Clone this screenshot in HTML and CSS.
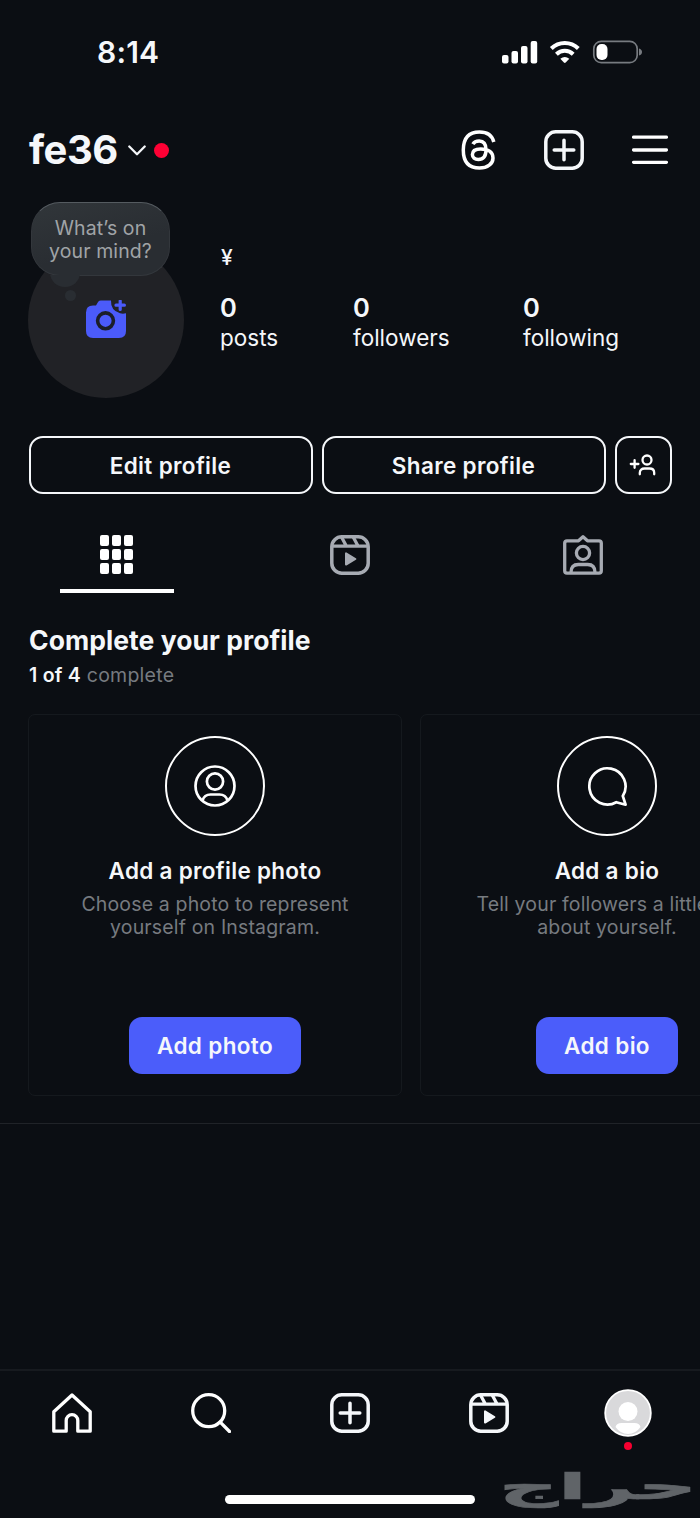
FILE: index.html
```html
<!DOCTYPE html>
<html lang="en">
<head>
<meta charset="utf-8">
<title>Profile</title>
<link rel="stylesheet" href="styles.css">
</head>
<body>
<svg class="defs" width="0" height="0" aria-hidden="true">
  <symbol id="reels" viewBox="0 0 40 40">
    <rect x="1.8" y="1.8" width="36.4" height="36.4" rx="10" fill="none" stroke="currentColor" stroke-width="3.5"/>
    <path d="M2 11.2H38M11.5 2l4.8 9M23.200 2l4.800 9" fill="none" stroke="currentColor" stroke-width="3.300"/>
    <path d="M16 18.400v11.200l9.400-5.600z" fill="currentColor" stroke="currentColor" stroke-width="2" stroke-linejoin="round"/>
  </symbol>
  <symbol id="plus" viewBox="0 0 40 40">
    <g fill="none" stroke="currentColor" stroke-width="3.5" stroke-linecap="round">
      <rect x="1.8" y="1.8" width="36.400" height="36.400" rx="10"/><path d="M20 10.200v19.600M10.200 20h19.600"/>
    </g>
  </symbol>
</svg>
<div class="screen">
  <header class="status">
    <span class="clock">8:14</span>
    <svg class="status-icons" viewBox="0 0 140 24" fill="#fff">
      <rect x="0" y="15" width="6.500" height="8.500" rx="2"/><rect x="9.500" y="11" width="6.500" height="12.500" rx="2"/><rect x="19" y="6" width="6.500" height="17.500" rx="2"/><rect x="28.700" y="1" width="6.500" height="22.500" rx="2"/>
      <g fill="none" stroke="#fff" stroke-width="4"><path d="M49.300 8.500a19.300 19.300 0 0 1 27 0"/><path d="M54.400 14.200a12 12 0 0 1 16.800 0"/></g>
      <path d="M58.300 18.800q4.500-3.600 9 0l-3.600 3.800q-.9.900-1.800 0z"/>
      <rect x="91.800" y="1.300" width="43.400" height="21.400" rx="7.500" fill="none" stroke="#777b80" stroke-width="1.700"/>
      <rect x="94.500" y="4" width="11" height="16" rx="5"/>
      <path d="M137 8.500q3 1 3 3.500t-3 3.500z" fill="#777b80"/>
    </svg>
  </header>

  <div class="topbar">
    <h1 class="username">fe36</h1>
    <svg class="chevron" viewBox="0 0 18 11"><path d="M1.300 1.500 9 9.200l7.700-7.700" fill="none" stroke="#f5f7fa" stroke-width="2.300" stroke-linecap="round" stroke-linejoin="round"/></svg>
    <i class="alert"></i>
    <div class="top-icons">
      <svg class="threads" viewBox="0 0 36 40"><path d="M32.800 12C31.200 5.200 26.300 1.900 18.500 1.900 7.500 1.900 2.300 8.500 2.300 20s5.200 18.100 16.200 18.100c8 0 13.500-4.300 13.500-10.200 0-5.900-5-9-12.300-9-5.200 0-8.300 2.100-8.300 5.700 0 2.900 2.400 4.900 5.900 4.900 5 0 7.700-3.500 7.700-9.700 0-6-2.400-8.900-6.800-8.900-3 0-5.200 1.200-6.300 3.200" fill="none" stroke="#fff" stroke-width="3.500"/></svg>
      <svg class="icon"><use href="#plus"/></svg>
      <svg class="menu" viewBox="0 0 36 30"><path d="M1.600 2.200h32.800M1.600 15h32.800M1.600 27.300h32.800" stroke="#fff" stroke-width="3.300" stroke-linecap="round"/></svg>
    </div>
  </div>

  <section class="profile">
    <div class="avatar">
      <svg class="camera" viewBox="0 0 40 38">
        <path d="M7 5.500h3l2.200-3.800Q13.200.500 15 .500h10q-.5 10 9 12.700 2.500.8 6 .1V31q0 7-7 7H7q-7 0-7-7V12.500q0-7 7-7z" fill="#4b5bfa"/>
        <circle cx="19.500" cy="20.800" r="7.900" fill="none" stroke="#1b1e29" stroke-width="3.600"/>
        <path d="M34.200 1v8.400M30 5.200h8.400" stroke="#4b5bfa" stroke-width="3.200" stroke-linecap="round"/>
      </svg>
      <div class="note">What’s on<br>your mind?</div>
      <i class="tail"></i><i class="tail-dot"></i>
    </div>
    <div class="info">
      <div class="name">¥</div>
      <div class="stats">
        <div><b>0</b><span>posts</span></div>
        <div><b>0</b><span>followers</span></div>
        <div><b>0</b><span>following</span></div>
      </div>
    </div>
  </section>

  <div class="actions">
    <button class="outline">Edit profile</button>
    <button class="outline">Share profile</button>
    <button class="outline"><svg class="add-person" viewBox="0 0 28 22" fill="none" stroke="#fff" stroke-width="2.300" stroke-linecap="round"><path d="M1.800 10h7.600M5.600 6.200v7.600M10.800 20.300v-1.500c0-3 2-4.300 4.700-4.300h5c2.700 0 4.700 1.300 4.700 4.300v1.500"/><circle cx="18" cy="6" r="4.500"/></svg></button>
  </div>

  <nav class="tabs">
    <span class="tab active"><span class="grid"><i></i><i></i><i></i><i></i><i></i><i></i><i></i><i></i><i></i></span></span>
    <span class="tab"><svg class="icon"><use href="#reels"/></svg></span>
    <span class="tab"><svg class="icon" viewBox="0 0 40 40" fill="none" stroke="currentColor" stroke-width="3.300" stroke-linejoin="round"><path d="M4 5.800h11.500l4.500-4 4.500 4H36q2.300 0 2.300 2.300v27.700q0 2.400-2.300 2.400H4q-2.300 0-2.300-2.400V8.100Q1.700 5.800 4 5.800z"/><circle cx="20" cy="18" r="6.600"/><path d="M8 37.500c0-5.500 3-8 7.300-8h9.400c4.300 0 7.300 2.500 7.300 8"/></svg></span>
  </nav>

  <h2 class="heading">Complete your profile</h2>
  <p class="progress"><b>1 of 4</b> complete</p>

  <div class="cards">
    <article class="card">
      <div class="ring"><svg viewBox="0 0 42 42" fill="none" stroke="#fff" stroke-width="2.700"><circle cx="21" cy="21" r="19.500"/><circle cx="21" cy="16.500" r="8.100"/><path d="M8.500 35.500c1.200-4 4-6 8-6h9c4 0 6.800 2 8 6"/></svg></div>
      <h3>Add a profile photo</h3>
      <p>Choose a photo to represent<br>yourself on Instagram.</p>
      <button class="primary">Add photo</button>
    </article>
    <article class="card">
      <div class="ring"><svg viewBox="0 0 42 42" fill="none" stroke="#fff" stroke-width="2.700" stroke-linejoin="round"><path d="M36.800 31A18.100 18.100 0 1 0 30.300 37.200L39.600 39.700z"/></svg></div>
      <h3>Add a bio</h3>
      <p>Tell your followers a little bit<br>about yourself.</p>
      <button class="primary">Add bio</button>
    </article>
  </div>

  <footer class="bottom">
    <nav class="navbar">
      <span><svg class="icon" viewBox="0 0 40 40"><path d="M1.800 18.800 20 2l18.200 16.800v19.400H25.800V27.500a5.800 5.800 0 0 0-11.600 0v10.700H1.800z" fill="none" stroke="#fff" stroke-width="3.300" stroke-linejoin="round"/></svg></span>
      <span><svg class="icon" viewBox="0 0 40 40" fill="none" stroke="#fff" stroke-width="3.300" stroke-linecap="round"><circle cx="17.700" cy="17.700" r="16"/><path d="m29.200 29.200 9.300 9.300"/></svg></span>
      <span><svg class="icon"><use href="#plus"/></svg></span>
      <span><svg class="icon"><use href="#reels"/></svg></span>
      <span class="me"><svg viewBox="0 0 48 48"><circle cx="24" cy="24" r="22.800" fill="#d9d9db" stroke="#fff" stroke-width="1.800"/><circle cx="24" cy="22.500" r="9.500" fill="#fff"/><path d="M11.500 38q1-4 6-4h13q5 0 6 4-5 7-12.500 7t-12.500-7z" fill="#fff"/></svg><i class="nav-dot"></i></span>
    </nav>
    <div class="home-indicator"></div>
    <svg class="watermark" viewBox="0 0 196 42" lang="ar"><text x="98" y="27" text-anchor="middle" direction="rtl" textLength="198" lengthAdjust="spacingAndGlyphs">حراج</text></svg>
  </footer>
</div>
</body>
</html>
```
FILE: styles.css
```css
* { box-sizing: border-box; }
body { margin: 0; background: #0b0e13; color: #f5f7fa; font-family: Inter, "Noto Sans", sans-serif; }
h1, h2, h3, p { margin: 0; }
svg { display: block; flex: none; }
button { font: inherit; color: inherit; padding: 0; }
.defs { position: absolute; }
.screen { width: 700px; height: 1518px; overflow: hidden; display: flex; flex-direction: column; }
.icon { width: 40px; height: 40px; }

.status { height: 104px; padding: 0 58px 0 97px; display: flex; align-items: center; justify-content: space-between; flex: none; }
.clock { font-size: 30px; font-weight: 600; letter-spacing: .2px; }
.status-icons { width: 140px; height: 24px; }

.topbar { height: 92px; padding: 0 32px 0 29px; display: flex; align-items: center; flex: none; }
.username { font-size: 40px; line-height: 50px; font-weight: 700; letter-spacing: -.5px; width: 89px; }
.chevron { width: 18px; height: 11px; margin-left: 10px; }
.alert { width: 15px; height: 15px; border-radius: 50%; background: #ff0034; margin-left: 8px; }
.top-icons { display: flex; align-items: center; margin-left: auto; }
.threads { width: 36px; height: 40px; margin-right: 47px; }
.menu { width: 36px; height: 30px; margin-left: 48px; }

.profile { height: 240px; padding: 46px 0 0 28px; display: flex; flex: none; }
.avatar { position: relative; width: 156px; height: 156px; border-radius: 50%; background: #212226; padding: 58px 0 0 58px; flex: none; }
.camera { width: 40px; height: 38px; }
.note { position: absolute; left: 3px; top: -40px; width: 139px; height: 74px; border-radius: 29px; background: linear-gradient(165deg, #31363a, #292d32 60%); border: 1px solid #33373c; border-top-color: #555b60; color: #a0a4a7; font-size: 19.500px; line-height: 23px; letter-spacing: .1px; text-align: center; padding-top: 14px; white-space: nowrap; }
.tail { position: absolute; left: 22px; top: 17px; width: 30px; height: 28px; border-radius: 50%; background: #292d32; clip-path: inset(16px 0 0 0); }
.tail-dot { position: absolute; left: 37px; top: 48px; width: 11px; height: 11px; border-radius: 50%; background: #292d32; }
.info { padding-left: 36px; }
.name { font-size: 21px; line-height: 26px; font-weight: 500; padding: 3px 0 0 1px; }
.stats { display: grid; grid-template-columns: 133px 170px 150px; margin-top: 22px; font-size: 22.500px; }
.stats b, .stats span { display: block; line-height: 30px; }
.stats b { font-size: 25.500px; font-weight: 600; }
.stats span { letter-spacing: 0; }

.actions { display: grid; grid-template-columns: 284px 284px 57px; gap: 9px; padding-left: 28.500px; height: 58px; flex: none; }
.outline { height: 58px; border: 2px solid #f5f7fa; border-radius: 14px; background: none; font-size: 22.500px; font-weight: 600; letter-spacing: .35px; display: flex; align-items: center; justify-content: center; }
.add-person { width: 28px; height: 22px; }

.tabs { display: grid; grid-template-columns: repeat(3, 1fr); margin-top: 22px; height: 77px; padding: 0; flex: none; color: #a7abb3; }
.tab { display: flex; justify-content: center; align-items: flex-start; padding-top: 19px; }
.active { width: 114px; margin-left: 59.500px; border-bottom: 4px solid #fff; }
.grid { display: grid; grid-template-columns: repeat(3, 9px); grid-auto-rows: 11px; gap: 3px; }
.grid i { background: #fff; border-radius: 2px; }

.heading { margin: 30px 0 0 29px; font-size: 26.500px; line-height: 34px; font-weight: 700; letter-spacing: .05px; }
.progress { margin: 5px 0 0 29px; font-size: 19.500px; line-height: 26px; color: #777b80; letter-spacing: .25px; }
.progress b { font-weight: 600; color: #f5f7fa; }

.cards { display: flex; gap: 18px; margin-top: 26px; padding: 0 0 27px 28px; border-bottom: 1px solid #202328; height: 410px; flex: none; }
.card { width: 374px; height: 382px; flex: none; border: 1px solid #15191e; border-radius: 7px; display: flex; flex-direction: column; align-items: center; text-align: center; padding-top: 21px; }
.ring { width: 100px; height: 100px; border: 2.500px solid #fff; border-radius: 50%; display: flex; align-items: center; justify-content: center; }
.ring svg { width: 42px; height: 42px; }
.card h3 { font-size: 22.500px; line-height: 30px; font-weight: 600; margin-top: 20px; letter-spacing: .3px; }
.card p { font-size: 19.500px; line-height: 23px; color: #777b80; margin-top: 7px; letter-spacing: .16px; white-space: nowrap; }
.primary { height: 57px; padding: 0 28.500px; margin-top: 78px; background: #4b5dfa; border: 0; border-radius: 13px; font-size: 22.500px; font-weight: 600; letter-spacing: .35px; }

.bottom { position: relative; margin-top: auto; height: 149px; border-top: 2px solid #171a1f; flex: none; }
.navbar { display: grid; grid-template-columns: repeat(5, 139px); padding-left: 2.500px; height: 85px; margin-top: -1px; }
.navbar span { display: flex; align-items: center; justify-content: center; }
.me { position: relative; }
.me svg { width: 48px; height: 48px; }
.nav-dot { position: absolute; width: 8px; height: 8px; border-radius: 50%; background: #f70030; left: 65px; top: 72px; }
.home-indicator { width: 250px; height: 9px; border-radius: 5px; background: #fff; margin: 40px 0 0 225px; }
.watermark { position: absolute; right: 4px; bottom: 4px; width: 196px; height: 42px; overflow: visible; }
.watermark text { font: 700 36px "DejaVu Sans", sans-serif; fill: #606468; stroke: #606468; stroke-width: .7px; }
```
